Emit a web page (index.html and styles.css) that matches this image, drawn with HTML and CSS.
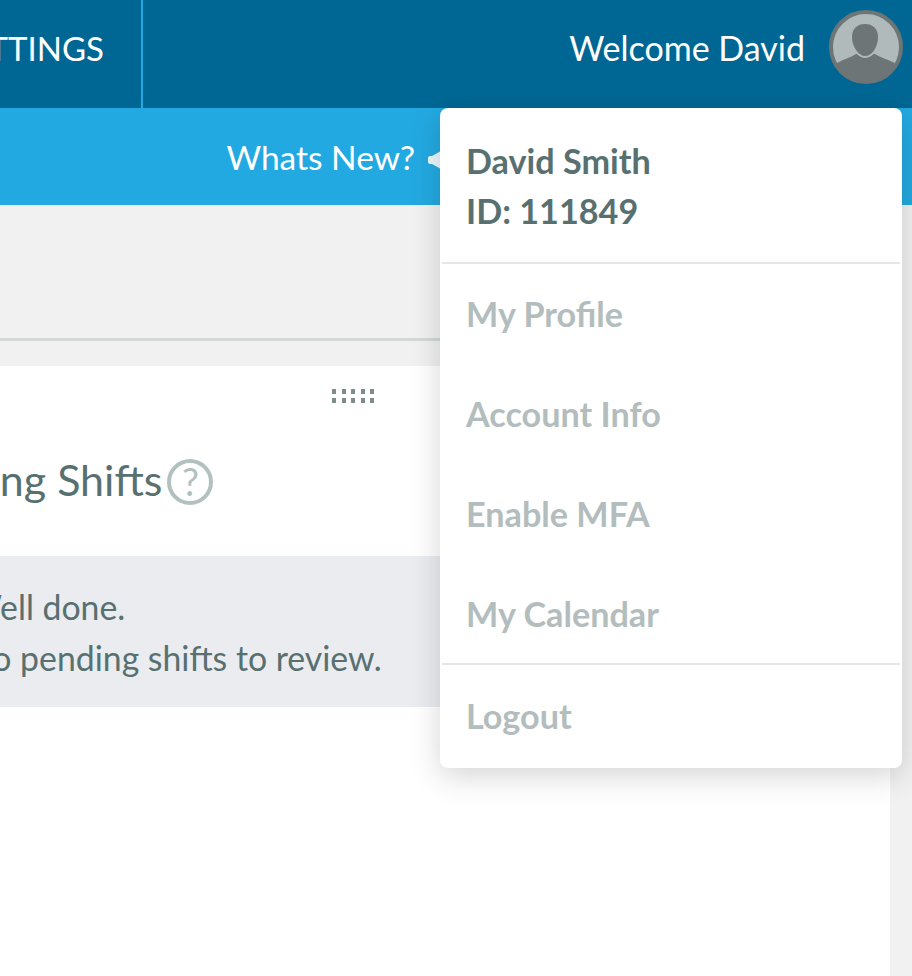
FILE: index.html
```html
<!DOCTYPE html>
<html lang="en">
<head>
<meta charset="utf-8">
<title>Dashboard</title>
<link rel="stylesheet" href="styles.css">
</head>
<body>
<div class="page">
  <header class="topbar">
    <div class="nav-item"><span class="nav-label">SETTINGS</span></div>
    <div class="user">
      <span class="welcome">Welcome David</span>
      <svg class="avatar" viewBox="0 0 74 74" aria-hidden="true">
        <circle cx="37" cy="37" r="35" fill="#b0baba" stroke="#6d7577" stroke-width="4"/>
        <path d="M7 54C13 49 22 48 27 44L46 44C51 48 60 49 67 54C61 65 50 72 37 72C24 72 13 65 7 54Z" fill="#6d7577"/>
        <path d="M36 13C44 13 50 18 50 27C50 37 44 47 36 47C29 47 22 37 22 27C22 18 28 13 36 13Z" fill="#6d7577" stroke="#b0baba" stroke-width="2"/>
      </svg>
    </div>
  </header>
  <div class="subbar">
    <span class="whats-new">Whats New?</span>
    <svg class="megaphone" viewBox="0 0 24 24" aria-hidden="true">
      <path d="M0 10C0 8 2 8 4 8L12 3.5V20.5L4 16C2 16 0 16 0 14Z" fill="#fff" fill-opacity=".9"/>
    </svg>
  </div>
  <main class="content">
    <div class="main-col">
      <div class="rule"></div>
      <section class="card">
        <div class="drag-row">
          <div class="drag" aria-hidden="true">
            <i></i><i></i><i></i><i></i><i></i><i></i><i></i><i></i><i></i><i></i>
          </div>
        </div>
        <div class="card-title">
          <h2>Pending Shifts</h2>
          <span class="help">?</span>
        </div>
        <div class="notice">
          <p>Well done.</p>
          <p>No pending shifts to review.</p>
        </div>
      </section>
    </div>
    <div class="side-col"></div>
  </main>
  <div class="menu">
    <div class="menu-head">
      <div>David Smith</div>
      <div>ID: 111849</div>
    </div>
    <div class="menu-group">
      <a class="menu-link">My Profile</a>
      <a class="menu-link">Account Info</a>
      <a class="menu-link">Enable MFA</a>
      <a class="menu-link">My Calendar</a>
    </div>
    <div class="menu-foot">
      <a class="menu-link">Logout</a>
    </div>
  </div>
</div>
</body>
</html>
```
FILE: styles.css
```css
* { box-sizing: border-box; }
html, body { margin: 0; height: 100%; }
body { font-family: Lato, "Open Sans", sans-serif; overflow: hidden; background: #fff; }
.page { position: relative; width: 912px; height: 976px; display: flex; flex-direction: column; overflow: hidden; }

.topbar { height: 108px; background: #006794; display: flex; justify-content: space-between; align-items: stretch; color: #fff; flex: none; }
.nav-item { width: 143px; border-right: 2px solid #23a9e1; display: flex; align-items: center; justify-content: flex-end; padding-right: 37px; padding-bottom: 13px; white-space: nowrap; }
.nav-label { font-size: 33px; }
.user { display: flex; align-items: center; gap: 24px; padding-right: 9px; padding-bottom: 14px; }
.welcome { font-size: 34px; }
.avatar { width: 74px; height: 74px; display: block; }

.subbar { height: 97px; background: #23a9e1; flex: none; display: flex; align-items: center; justify-content: flex-end; padding-right: 460px; color: #fff; gap: 13px; }
.whats-new { font-size: 33.5px; }
.megaphone { width: 24px; height: 24px; flex: none; margin-top: 6px; }

.content { flex: 1; display: flex; background: #f1f1f1; min-height: 0; }
.main-col { width: 890px; flex: none; display: flex; flex-direction: column; padding-top: 133px; }
.side-col { flex: 1; background: #f1f1f1; }
.rule { height: 3px; background: #d2d8d8; flex: none; }
.card { flex: 1; background: #fff; margin-top: 25px; }
.drag-row { height: 71px; padding: 23px 0 0 332px; }
.drag { display: grid; grid-template-columns: repeat(5, 4px); grid-auto-rows: 5px; gap: 4px 5.5px; width: 42px; }
.drag i { background: #7f8c8c; }
.card-title { height: 119px; display: flex; align-items: flex-start; padding: 18px 0 0 0; margin-left: -106px; gap: 5px; }
.card-title h2 { margin: 0; font-size: 43px; font-weight: 400; color: #587070; line-height: 50px; white-space: nowrap; }
.help { width: 46px; height: 46px; margin-top: 4px; border: 4px solid #b3c0c0; border-radius: 50%; color: #b3c0c0; font-size: 38px; line-height: 37px; text-align: center; flex: none; }
.notice { height: 151px; background: #eaecf0; padding-top: 26px; }
.notice p { margin: 0 0 0 -33px; font-size: 33.8px; line-height: 51px; color: #587070; white-space: nowrap; }

.menu { position: absolute; left: 440px; top: 108px; width: 462px; height: 660px; background: #fff; border-radius: 8px; box-shadow: 0 8px 30px rgba(0, 0, 0, .17); display: flex; flex-direction: column; }
.menu-head { height: 156px; padding: 28px 0 0 24px; font-size: 34.2px; font-weight: 700; line-height: 50px; color: #587070; margin: 0 2px; border-bottom: 2px solid #e4e7ea; }
.menu-group { height: 401px; margin: 0 2px; padding: 0 0 0 24px; border-bottom: 2px solid #e4e7ea; display: flex; flex-direction: column; }
.menu-foot { padding: 1px 0 0 26px; }
.menu-link { display: block; height: 100px; font-size: 34.2px; font-weight: 700; color: #b3bdbd; line-height: 100px; }
```
